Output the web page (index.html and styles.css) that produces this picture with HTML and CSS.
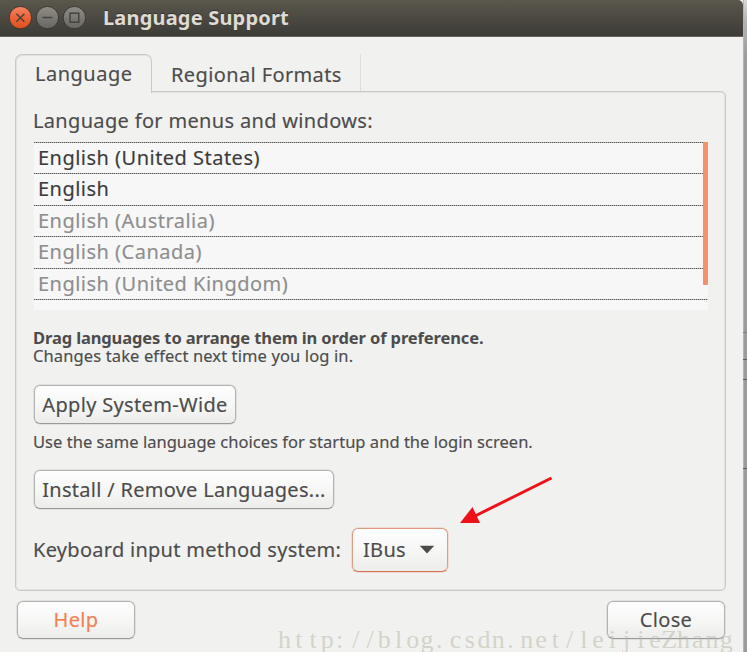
FILE: index.html
```
<!DOCTYPE html>
<html lang="en">
<head>
<meta charset="utf-8">
<title>Language Support</title>
<link rel="stylesheet" href="styles.css">
</head>
<body>
<div class="desktop">
  <main class="window">
    <header class="titlebar">
      <svg class="controls" width="78" height="26" viewBox="0 0 78 26">
        <defs>
          <linearGradient id="close" x1="0" y1="0" x2="0" y2="1"><stop offset="0" stop-color="#f58562"/><stop offset=".5" stop-color="#ed6338"/><stop offset="1" stop-color="#e04f1d"/></linearGradient>
          <linearGradient id="grey" x1="0" y1="0" x2="0" y2="1"><stop offset="0" stop-color="#8f8d86"/><stop offset="1" stop-color="#686660"/></linearGradient>
        </defs>
        <g stroke="#393832" stroke-width="1">
          <circle cx="12.4" cy="12.6" r="11.2" fill="url(#close)"/>
          <circle cx="39.4" cy="12.6" r="11.2" fill="url(#grey)"/>
          <circle cx="66.4" cy="12.6" r="11.2" fill="url(#grey)"/>
        </g>
        <g fill="none" stroke="#46443e" stroke-width="1.5">
          <path d="M8.4 8.8l8 8M16.4 8.8l-8 8M34.4 12.6h10"/>
          <rect x="62" y="8.2" width="8.8" height="9"/>
        </g>
      </svg>
      <h1 class="title">Language Support</h1>
    </header>

    <section class="notebook">
      <nav class="tabs">
        <div class="tab tab-active"><span class="t-language">Language</span></div>
        <div class="tab tab-idle"><span class="t-regional">Regional Formats</span></div>
      </nav>
      <div class="panel">
        <p class="label label-menus">Language for menus and windows:</p>
        <div class="list">
          <div class="row">English (United States)</div>
          <div class="row">English</div>
          <div class="row muted">English (Australia)</div>
          <div class="row muted">English (Canada)</div>
          <div class="row muted">English (United Kingdom)</div>
          <div class="row row-empty"></div>
          <div class="scrollbar"></div>
        </div>
        <p class="note note-bold">Drag languages to arrange them in order of preference.</p>
        <p class="note note-changes">Changes take effect next time you log in.</p>
        <button class="btn btn-apply">Apply System-Wide</button>
        <p class="note note-use">Use the same language choices for startup and the login screen.</p>
        <button class="btn btn-install">Install / Remove Languages...</button>
        <div class="input-row">
          <span class="label-kb">Keyboard input method system:</span>
          <button class="btn combo"><span>IBus</span><svg width="16" height="10" viewBox="0 0 16 10"><path d="M.8.8h14.4L8 8.4z" fill="#4a4a48"/></svg></button>
        </div>
      </div>
    </section>

    <footer class="actions">
      <button class="btn btn-help">Help</button>
      <button class="btn btn-close">Close</button>
    </footer>
  </main>
  <div class="backdrop"><i class="mark mark-a"></i><i class="mark mark-b"></i><i class="mark mark-c"></i><i class="mark mark-d"></i></div>

  <svg class="arrow" width="96" height="52" viewBox="0 0 96 52">
    <path d="M91.500 2L14 40.5" stroke="#ee1218" stroke-width="3" fill="none"/>
    <path d="M0 47L12.500 31L20 47z" fill="#ee1218"/>
  </svg>
  <svg class="watermark" width="469" height="28" viewBox="278 0 469 28">
    <text id="wm" y="24">http://blog.csdn.net/leijieZhang</text>
  </svg>
</div>
<script src="watermark.js"></script>
</body>
</html>
```
FILE: watermark.js
```
// Fixed-pitch placement: each glyph is centred in its own cell.
const wm = document.getElementById('wm');
wm.setAttribute('x', Array.from(wm.textContent, (c, i) => (284.5 + i * 14.25 - (c === '.' || c === ':' ? 2 : 0)).toFixed(2)).join(' '));
```
FILE: styles.css
```
* { box-sizing: border-box; }

body {
  margin: 0;
  font: 20px/24px "Noto Sans", sans-serif;
  color: #4c4c4c;
  background: #f1f1ef;
  -webkit-text-stroke: .15px;
}

p, h1 { margin: 0; font-weight: normal; }

.desktop {
  position: relative;
  display: flex;
  width: 747px;
  height: 652px;
  overflow: hidden;
}

.window {
  width: 743px;
  height: 652px;
  background: #f1f1ef;
  display: flex;
  flex-direction: column;
}

.backdrop {
  flex: 1;
  position: relative;
  background: linear-gradient(#d9d9da 0, #b4b5b5 20px, #9a9c9b 60px);
  border-left: 1px solid #b4b4b3;
}

.mark { position: absolute; left: -1px; right: 0; height: 1px; background: #5c5d5c; }
.mark-a { top: 332px; background: #808180; }
.mark-b { top: 359px; }
.mark-c { top: 379px; }
.mark-d { top: 468px; }

.titlebar {
  height: 37px;
  padding: 0 0 0 8px;
  display: flex;
  align-items: center;
  background: linear-gradient(#5a574c, #3d3c37 35px);
  border-bottom: 1px solid #66655d;
  border-top-right-radius: 5px;
}

.controls { margin-top: -1px; }

.title {
  margin: 0 0 0 17px;
  font-size: 20px;
  font-weight: bold;
  letter-spacing: .18px;
  color: #dfdbd2;
  text-shadow: 0 -1px 0 #33322e;
  -webkit-text-stroke: 0;
}

.notebook { margin: 17px 17px 0 15px; }

.tabs {
  display: flex;
  align-items: flex-start;
  height: 38px;
  position: relative;
  z-index: 1;
  margin-bottom: -1px;
}

.tab-active {
  width: 137px;
  height: 39px;
  padding: 7px 0 0 19px;
  border: 1px solid #cbc8c6;
  border-bottom: 0;
  border-radius: 7px 7px 0 0;
  background: #f1f1ef;
  box-shadow: inset 1px 1px 0 #e3e1df;
}

.tab-idle {
  width: 209px;
  padding: 9px 0 0 19px;
  border-right: 1px solid #dededc;
  height: 37px;
}

.t-language { letter-spacing: .5px; }
.t-regional { letter-spacing: .38px; }

.panel {
  height: 500px;
  padding: 17px 17px 0 17px;
  border: 1px solid #cbc8c6;
  border-radius: 0 5px 5px 5px;
  box-shadow: inset 0 0 0 1px #e6e4e2;
  display: flex;
  flex-direction: column;
  align-items: flex-start;
}

.label-menus { letter-spacing: .33px; white-space: nowrap; height: 33px; }

.list {
  position: relative;
  width: 674px;
  height: 168px;
  margin-left: 1px;
  background: #f7f7f7;
  overflow: hidden;
}

.row {
  height: 31.4px;
  padding: 4px 0 0 4px;
  background: repeating-linear-gradient(90deg, #505050 0 1px, #b8b8b8 1px 2px) 0 0 / 100% 1px no-repeat;
  color: #3c3c3c;
  letter-spacing: .48px;
}

.muted { color: #8e8e8e; }

.scrollbar {
  position: absolute;
  top: 0;
  right: 0;
  width: 5px;
  height: 143px;
  border-radius: 1px;
  background: #f39169;
}

.note { font-size: 16.5px; line-height: 18px; white-space: nowrap; }
.note-bold { margin-top: 19px; font-weight: bold; letter-spacing: -.12px; -webkit-text-stroke: 0; }
.note-changes { letter-spacing: .12px; }
.note-use { margin-top: 9px; letter-spacing: .03px; }

.btn {
  height: 39px;
  padding: 0;
  border: 1px solid #b3b3b2;
  border-bottom-color: #999997;
  border-radius: 6px;
  box-shadow: 0 0 0 .5px #cfcfcd;
  background: linear-gradient(#fefefe, #f5f5f4 60%, #ececeb);
  font: inherit;
  color: #4c4c4c;
  white-space: nowrap;
}

.btn-apply { width: 202px; margin: 20px 0 0 1px; letter-spacing: .33px; }
.btn-install { width: 300px; margin: 19px 0 0 1px; letter-spacing: .28px; }

.input-row { display: flex; align-items: center; margin-top: 19px; }
.label-kb { width: 319px; letter-spacing: .28px; white-space: nowrap; }

.combo {
  width: 96px;
  height: 44px;
  padding: 0 12px 0 10px;
  display: flex;
  align-items: center;
  justify-content: space-between;
  border-color: #e09c82;
  border-bottom-color: #cf7350;
  box-shadow: 0 0 0 .5px #efc4b3;
  letter-spacing: .3px;
}

.actions {
  display: flex;
  justify-content: space-between;
  padding: 10px 18px 0 17px;
}

.actions .btn { width: 118px; height: 38px; letter-spacing: .3px; }
.actions .btn-help { color: #f47f52; }

.arrow { position: absolute; left: 460px; top: 476px; }

.watermark { position: absolute; left: 278px; top: 624px; }

.watermark text {
  font: 26px "Liberation Serif", serif;
  text-anchor: middle;
  fill: #b9b9ab;
  fill-opacity: .55;
  -webkit-text-stroke: 0;
}
```
